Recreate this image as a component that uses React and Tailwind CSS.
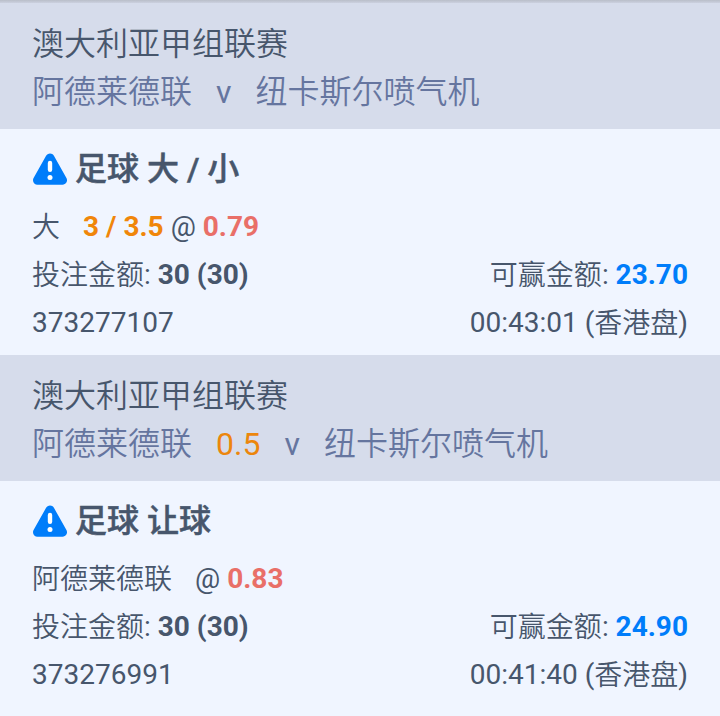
import React from "react";

const bets = [
  {
    id: "373277107",
    league: "澳大利亚甲组联赛",
    home: "阿德莱德联",
    away: "纽卡斯尔喷气机",
    market: "足球 大 / 小",
    pick: "大",
    line: "3 / 3.5",
    odds: "0.79",
    stake: "30 (30)",
    win: "23.70",
    time: "00:43:01",
    oddsType: "香港盘",
  },
  {
    id: "373276991",
    league: "澳大利亚甲组联赛",
    home: "阿德莱德联",
    handicap: "0.5",
    away: "纽卡斯尔喷气机",
    market: "足球 让球",
    pick: "阿德莱德联",
    odds: "0.83",
    stake: "30 (30)",
    win: "24.90",
    time: "00:41:40",
    oddsType: "香港盘",
  },
];

const WarningIcon = () => (
  <svg viewBox="0 0 36 34" className="mr-[7px] h-[34px] w-[36px] shrink-0">
    <path
      d="M18 6 L30.5 28.2 H5.5 Z"
      fill="#007dfa"
      stroke="#007dfa"
      strokeWidth="9"
      strokeLinejoin="round"
    />
    <path d="M18 11 V17.8" stroke="#fff" strokeWidth="4.4" strokeLinecap="round" />
    <circle cx="18" cy="25.5" r="2.5" fill="#fff" />
  </svg>
);

const Label = ({ children }) => (
  <span className="inline-block translate-y-px font-[350]">{children}</span>
);

const BetCard = ({ bet }) => (
  <div>
    <div className="h-[126px] bg-[#d6dceb] px-8 pt-[17px] text-[32px] leading-[48px]">
      <div className="font-[350]">{bet.league}</div>
      <div className="flex font-[350] text-[#65759f]">
        <span>{bet.home}</span>
        {bet.handicap && (
          <span className="ml-6 font-normal text-[#ec860c]">{bet.handicap}</span>
        )}
        <span className="mx-6 font-normal">v</span>
        <span>{bet.away}</span>
      </div>
    </div>
    <div className="h-[226px] px-8 pt-4 text-[28px] leading-[48px]">
      <div className="mb-[10px] flex items-center text-[32px] font-medium [-webkit-text-stroke:0.5px]">
        <WarningIcon />
        {bet.market}
      </div>
      <div className="flex">
        <span className="mr-[23px]">
          <Label>{bet.pick}</Label>
        </span>
        {bet.line && <b className="mr-[7px] text-[#f0860a]">{bet.line}</b>}
        <span className="mr-[7px]">@</span>
        <b className="text-[#e96f68]">{bet.odds}</b>
      </div>
      <div className="flex justify-between">
        <span>
          <Label>投注金额</Label>: <b>{bet.stake}</b>
        </span>
        <span>
          <Label>可赢金额</Label>: <b className="text-[#007dfa]">{bet.win}</b>
        </span>
      </div>
      <div className="flex justify-between">
        <span>{bet.id}</span>
        <span>
          {bet.time} (<Label>{bet.oddsType}</Label>)
        </span>
      </div>
    </div>
  </div>
);

const App = () => (
  <div className="h-[716px] w-[720px] overflow-hidden whitespace-nowrap bg-[#f0f5ff] font-[Roboto,'Noto_Sans_CJK_SC',sans-serif] text-[#47566c]">
    <div className="h-[3px] bg-linear-to-b from-[#b9bec9] to-[#ccd1df]"></div>
    {bets.map((bet) => (
      <BetCard key={bet.id} bet={bet} />
    ))}
  </div>
);

export default App;
